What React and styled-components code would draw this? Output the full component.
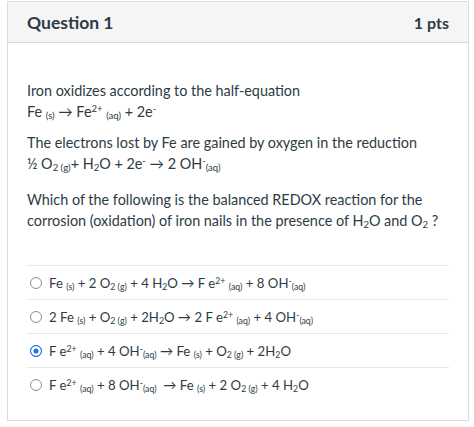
import React, { useState } from "react";
import styled, { createGlobalStyle } from "styled-components";

const GlobalStyle = createGlobalStyle`
  body {
    margin: 0;
    background: #ffffff;
    font-family: Lato, "Noto Sans", sans-serif;
    color: #2d3b45;
  }
`;

const answers = [
  [
    "Fe ", ["sub", "(s)"], " + 2 O", ["sub", "2 (g)"], " + 4 H", ["sub", "2"], "O → F e",
    ["sup", "2+"], " ", ["sub", "(aq)"], " + 8 OH", ["sup", "-"], ["sub", "(aq)"],
  ],
  [
    "2 Fe ", ["sub", "(s)"], " + O", ["sub", "2 (g)"], " + 2H", ["sub", "2"], "O → 2 F e",
    ["sup", "2+"], " ", ["sub", "(aq)"], " + 4 OH", ["sup", "-"], ["sub", "(aq)"],
  ],
  [
    "F e", ["sup", "2+"], " ", ["sub", "(aq)"], " + 4 OH", ["sup", "-"], ["sub", "(aq)"], " → Fe ",
    ["sub", "(s)"], " + O", ["sub", "2 (g)"], " + 2H", ["sub", "2"], "O",
  ],
  [
    "F e", ["sup", "2+"], " ", ["sub", "(aq)"], " + 8 OH", ["sup", "-"], ["sub", "(aq)"], "  → Fe ",
    ["sub", "(s)"], " + 2 O", ["sub", "2 (g)"], " + 4 H", ["sub", "2"], "O",
  ],
];

function Formula({ parts }) {
  return parts.map((p, i) => {
    if (typeof p === "string") return <span key={i}>{p}</span>;
    if (p[0] === "sub") return <Sub key={i}>{p[1]}</Sub>;
    return <Sup key={i}>{p[1]}</Sup>;
  });
}

function App() {
  const [picked, setPicked] = useState(2);
  return (
    <>
      <GlobalStyle />
      <Card>
        <Header>
          <Title>Question 1</Title>
          <Points>1 pts</Points>
        </Header>
        <Body>
          <Para $after={10}>
            Iron oxidizes according to the half-equation
            <br />
            Fe <Sub>(s)</Sub> → Fe<Sup>2+</Sup> <Sub>(aq)</Sub> + 2e<Sup>-</Sup>
          </Para>
          <Para $after={15}>
            The electrons lost by Fe are gained by oxygen in the reduction
            <br />½ O<Sub>2 (g)</Sub>+ H<Sub>2</Sub>O + 2e<Sup>-</Sup> → 2 OH
            <Sup>-</Sup>
            <Sub>(aq)</Sub>
          </Para>
          <Para $after={0}>
            Which of the following is the balanced REDOX reaction for the
            corrosion (oxidation) of iron nails in the presence of H<Sub>2</Sub>O and O
            <Sub>2</Sub> ?
          </Para>
          <AnswerList>
            {answers.map((a, i) => (
              <Answer key={i} onClick={() => setPicked(i)}>
                <Radio $checked={picked === i} />
                <AnswerText>
                  <Formula parts={a} />
                </AnswerText>
              </Answer>
            ))}
          </AnswerList>
        </Body>
      </Card>
    </>
  );
}

const Card = styled.div`
  margin: 1px 0 0 7px;
  width: 462px;
  height: 420px;
  box-sizing: border-box;
  border: 1px solid #dcdcdc;
  background: #fff;
`;

const Header = styled.div`
  display: flex;
  align-items: center;
  justify-content: space-between;
  height: 40px;
  padding: 0 19px;
  background: #f5f5f5;
  border-bottom: 1px solid #d8d8d8;
`;

const Title = styled.div`
  font-size: 17.5px;
  font-weight: 700;
  color: #2d3b45;
`;

const Points = styled.div`
  font-size: 16px;
  font-weight: 700;
  color: #2d3b45;
`;

const Body = styled.div`
  padding: 37px 19px 0 19px;
`;

const Para = styled.p`
  margin: 0 0 ${(p) => p.$after}px 0;
  font-size: 14.4px;
  line-height: 21px;
`;

const Sub = styled.sub`
  font-size: 0.66em;
  line-height: 0;
  vertical-align: -0.24em;
`;

const Sup = styled.sup`
  font-size: 0.66em;
  line-height: 0;
  vertical-align: 0.5em;
`;

const AnswerList = styled.div`
  margin-top: 34px;
  display: flex;
  flex-direction: column;
`;

const Answer = styled.label`
  display: flex;
  align-items: center;
  gap: 7px;
  height: 33px;
  padding-left: 1px;
  border-top: 1px solid #e6e6e6;
  cursor: pointer;
`;

const Radio = styled.span`
  width: 12px;
  height: 12px;
  border-radius: 50%;
  box-sizing: border-box;
  border: 1px solid ${(p) => (p.$checked ? "#1d6ee0" : "#8f8f8f")};
  background: ${(p) => (p.$checked ? "#1a73e8" : "#fff")};
  box-shadow: ${(p) => (p.$checked ? "inset 0 0 0 2.5px #fff" : "none")};
  flex-shrink: 0;
  margin-left: 2px;
`;

const AnswerText = styled.span`
  font-size: 13.2px;
  line-height: 20px;
  white-space: pre;
`;

export default App;
